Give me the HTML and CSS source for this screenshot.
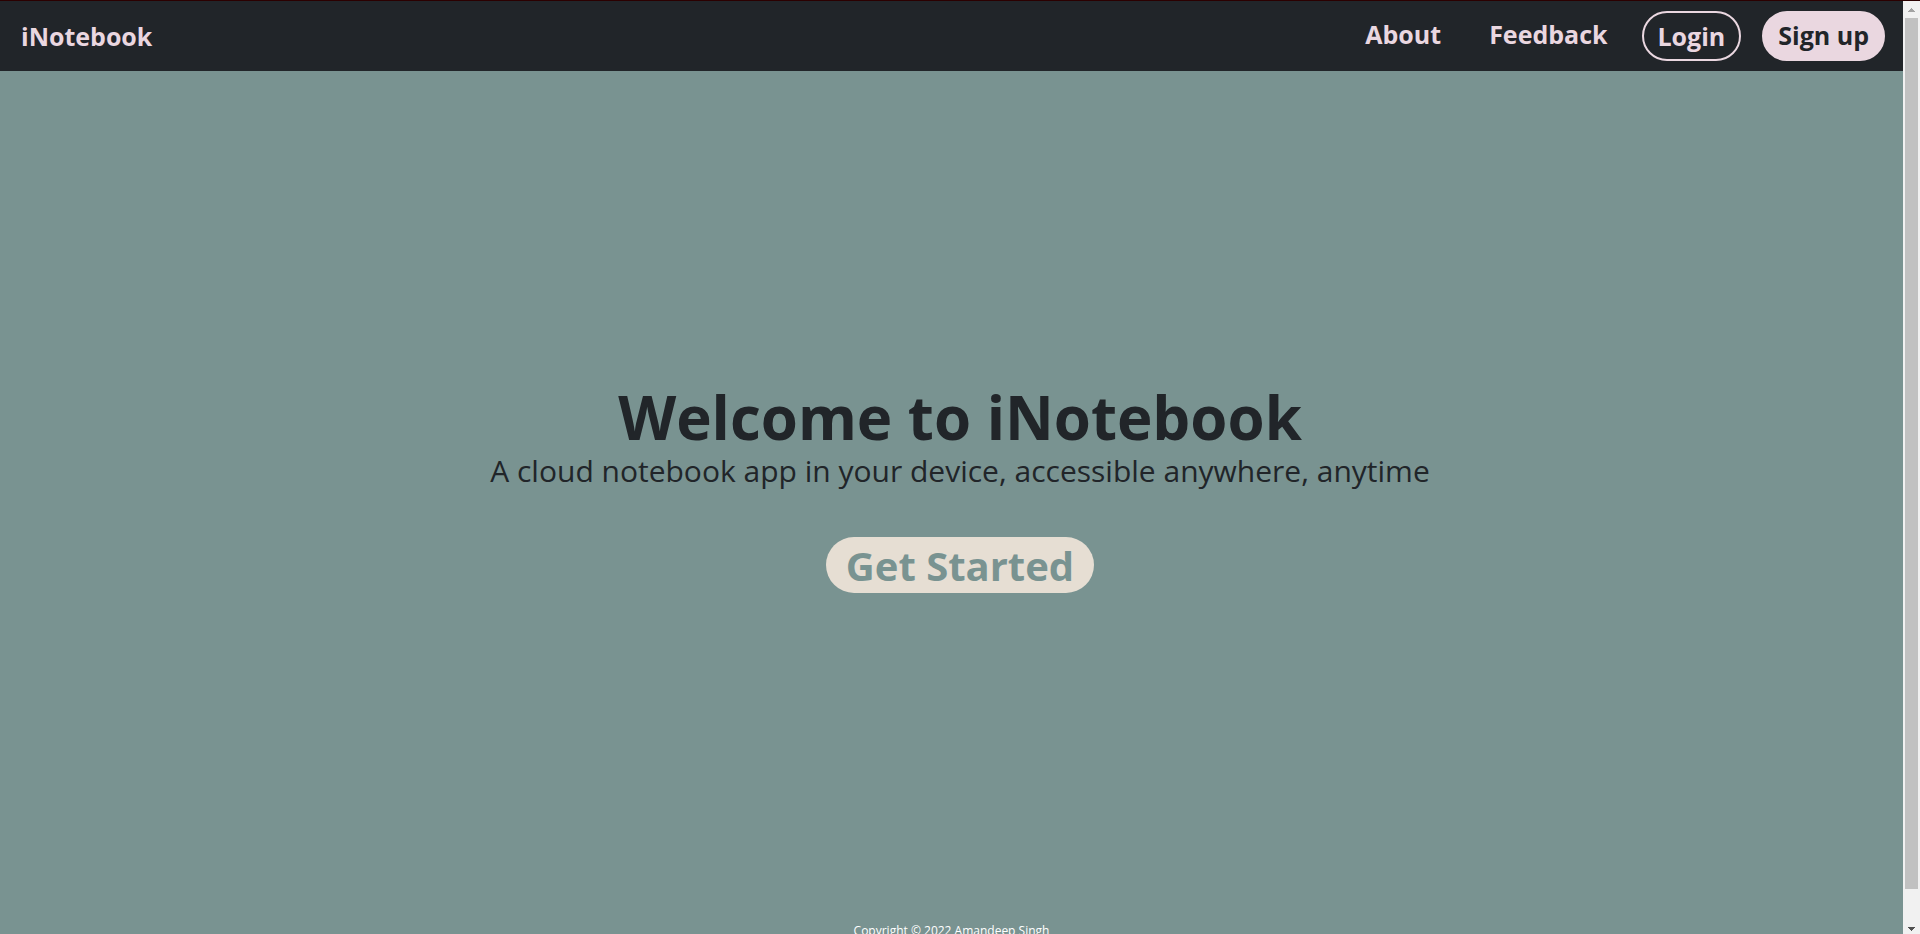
FILE: index.html
```html
<!DOCTYPE html>
<html lang="en">
<head>
<meta charset="utf-8">
<title>iNotebook</title>
<link rel="stylesheet" href="styles.css">
</head>
<body>
<div class="window">
  <header class="navbar">
    <a class="brand" href="#">iNotebook</a>
    <nav class="nav">
      <a class="nav-link" href="#">About</a>
      <a class="nav-link" href="#">Feedback</a>
      <button class="btn btn-login" type="button">Login</button>
      <button class="btn btn-signup" type="button">Sign up</button>
    </nav>
  </header>
  <main class="hero">
    <h1 class="hero-title">Welcome to iNotebook</h1>
    <p class="hero-text">A cloud notebook app in your device, accessible anywhere, anytime</p>
    <button class="btn-start" type="button">Get Started</button>
  </main>
  <footer class="footer">Copyright © 2022 Amandeep Singh</footer>
  <div class="scrollbar" aria-hidden="true">
    <svg class="arrow arrow-up" viewBox="0 0 7 4"><path d="M3 0h1v1h1v1h1v1h1v1H0V3h1V2h1V1h1z"/></svg>
    <div class="track"><div class="thumb"></div></div>
    <svg class="arrow arrow-down" viewBox="0 0 7 4"><path d="M0 0h7v1H6v1H5v1H4v1H3V3H2V2H1V1H0z"/></svg>
  </div>
</div>
</body>
</html>
```
FILE: styles.css
```css
* { box-sizing: border-box; }

body {
  margin: 0;
  font-family: "Open Sans", "Noto Sans", sans-serif;
  color: #212529;
  background: #799391;
}

.window {
  display: grid;
  grid-template-columns: 1fr 17px;
  grid-template-rows: auto 1fr auto;
  height: 100vh;
  overflow: hidden;
  border-top: 1px solid #2b0000;
}

.navbar {
  grid-area: 1 / 1;
  display: flex;
  align-items: center;
  justify-content: space-between;
  padding: 10px 18px 10px 21px;
  background: #212529;
}

.brand, .nav-link {
  color: #ead7e0;
  font-size: 25px;
  font-weight: 700;
  line-height: 36px;
  text-decoration: none;
}

.nav { display: flex; align-items: center; }

.nav-link { margin-right: 48px; padding-bottom: 4px; }
.nav-link + .nav-link { margin-right: 34px; }

.btn {
  height: 50px;
  padding: 0 14px;
  border: 2px solid #ead7e0;
  border-radius: 25px;
  font: 700 25px/36px "Open Sans", "Noto Sans", sans-serif;
}

.btn-login { margin-right: 21px; background: transparent; color: #ead7e0; }
.btn-signup { padding-bottom: 3px; background: #ead7e0; color: #212529; }

.hero {
  grid-area: 2 / 1 / 3 / 3;
  display: flex;
  flex-direction: column;
  align-items: center;
  justify-content: center;
  padding-bottom: 16px;
  text-align: center;
}

.hero-title { margin: 0; font-size: 60px; font-weight: 700; line-height: 64px; }
.hero-text { margin: 0 0 44px; font-size: 30px; font-weight: 400; line-height: 44px; }

.btn-start {
  height: 56px;
  padding: 2px 20px 0;
  border: 0;
  border-radius: 28px;
  background: #e6ded3;
  color: #799391;
  font: 700 40px/54px "Open Sans", "Noto Sans", sans-serif;
}

.footer {
  grid-area: 3 / 1;
  height: 12px;
  color: #fff;
  font-size: 12px;
  line-height: 18px;
  text-align: center;
}

.scrollbar {
  grid-area: 1 / 2 / 4 / 3;
  z-index: 1;
  display: flex;
  flex-direction: column;
  align-items: center;
  padding: 7px 0 3px;
  background: #f1f1f1;
}

.arrow { width: 7px; height: 4px; }
.arrow-up { fill: #a3a3a3; }
.arrow-down { fill: #505050; }

.track { flex: 1; width: 13px; padding: 6px 0; }
.thumb { height: 96.5%; background: #c1c1c1; }
```
